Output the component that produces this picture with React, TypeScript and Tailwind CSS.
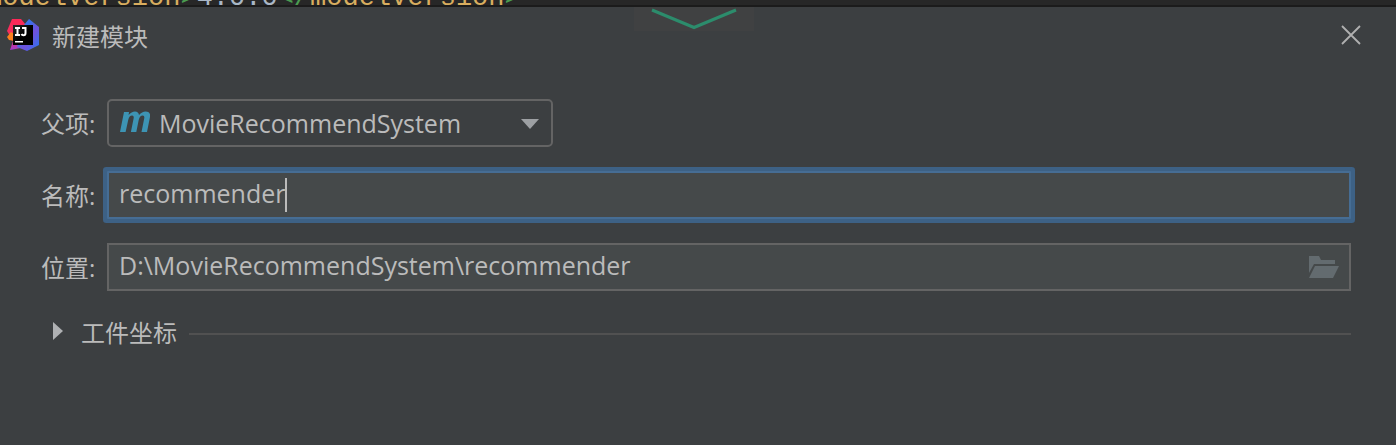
import type { ReactNode } from "react";

function IdeaLogo() {
  return (
    <svg viewBox="0 0 32 32" className="size-8 shrink-0" aria-hidden="true">
      <defs>
        <linearGradient id="blue" x1="0" y1="0" x2="1" y2="1">
          <stop offset="0" stopColor="#3f7cf0" />
          <stop offset=".35" stopColor="#3a70e8" />
          <stop offset=".6" stopColor="#7050dc" />
          <stop offset="1" stopColor="#2477f2" />
        </linearGradient>
        <linearGradient id="pink" x1="0" y1="0" x2="0" y2="1">
          <stop offset="0" stopColor="#fe2857" />
          <stop offset=".6" stopColor="#f0305f" />
          <stop offset="1" stopColor="#a03bd0" />
        </linearGradient>
        <linearGradient id="black" x1="0" y1="0" x2="1" y2="1">
          <stop offset="0" stopColor="#2b2b2b" />
          <stop offset=".5" stopColor="#000" />
        </linearGradient>
      </defs>
      <path d="M5 0H14L19 6V28L3 31 6 22 0 12Z" fill="url(#pink)" />
      <path d="M22 0 32 8V26L20 32 10 28 17 6Z" fill="url(#blue)" />
      <path d="M0 18 4 13 7 15V22L2 21Z" fill="#fc801d" />
      <path d="M6 6H26V26H6Z" fill="url(#black)" />
      <path
        d="M8 9H13M10.500 9V16M8 16H13M15 9H18.500V14Q18.500 16.200 16.500 16.200 15 16.200 14.500 15"
        fill="none"
        stroke="#fff"
        strokeWidth="2"
      />
      <path d="M8 22H16V23.500H8Z" fill="#fff" />
    </svg>
  );
}

function EditorStrip() {
  return (
    <div className="flex h-[7px] items-end overflow-hidden border-b-2 border-[#1b1b1b] bg-[#272727]">
      <code className="-ml-3.5 shrink-0 whitespace-pre font-['Liberation_Mono',monospace] text-[27px] leading-[14px] text-[#d9ae5f]">
        modelVersion<span className="text-[#4a9c50]">&gt;</span>
        <span className="text-[#a9b7c6]">4.0.0</span>
        <span className="text-[#4a9c50]">&lt;/</span>modelVersion
        <span className="text-[#4a9c50]">&gt;</span>
      </code>
    </div>
  );
}

function Row({ id, label, children }: { id: string; label: string; children: ReactNode }) {
  return (
    <div className="flex h-12 items-center">
      <label htmlFor={id} className="w-[66px] shrink-0 pt-0.5 text-2xl">
        {label}
      </label>
      {children}
    </div>
  );
}

export default function App() {
  return (
    <main className="flex min-h-screen flex-col bg-[#3c3f41] font-['Open_Sans','Noto_Sans_CJK_SC',sans-serif] text-[#bbbbbb]">
      <EditorStrip />
      <header className="relative flex h-14 items-center pr-[34px] pl-[7px]">
        <IdeaLogo />
        <h1 className="ml-[13px] pt-1 text-2xl">新建模块</h1>
        <div className="absolute top-0 left-1/2 h-6 w-[120px] -translate-x-[64px] bg-[#404142]">
          <svg viewBox="0 0 120 24" className="block h-6 w-full" aria-hidden="true">
            <path d="M18 3 60 20.500 102 3" fill="none" stroke="#2c8c6c" strokeWidth="3" />
          </svg>
        </div>
        <button type="button" aria-label="关闭" className="ml-auto">
          <svg viewBox="0 0 22 22" className="block size-[22px]" aria-hidden="true">
            <path d="M2 2 20 20M20 2 2 20" stroke="#b0b0b0" strokeWidth="1.800" />
          </svg>
        </button>
      </header>

      <form className="flex flex-col gap-6 pt-9 pr-[45px] pl-[41px]">
        <Row id="parent" label="父项:">
          <div className="relative h-12 w-[446px]">
            <select
              id="parent"
              className="h-12 w-full appearance-none rounded-[5px] border-2 border-[#646464] bg-[#3c3f41] pt-0.5 pl-[50px] text-[25px] outline-none"
            >
              <option>MovieRecommendSystem</option>
            </select>
            <svg viewBox="0 0 30 22" className="pointer-events-none absolute top-3 left-[13px] h-[22px] w-[30px]" aria-hidden="true">
              <path
                d="M4 1H9L8.600 4Q11.500 .500 15 .500 18.500 .500 19 4 22 .500 25.500 .500 31 .500 29.900 6.500L27 21H21.500L24.200 7.500Q24.800 4.600 22.800 4.600 19.800 4.600 18.700 9L16.300 21H10.900L13.600 7.500Q14.200 4.600 12.200 4.600 9.200 4.600 8.200 9L5.600 21H0Z"
                fill="#3d94b4"
              />
            </svg>
            <svg viewBox="0 0 18 10" className="pointer-events-none absolute top-5 right-3.5 h-2.5 w-[18px]" aria-hidden="true">
              <path d="M0 0H18L9 10Z" fill="#9da0a3" />
            </svg>
          </div>
        </Row>

        <Row id="name" label="名称:">
          <div className="flex h-12 min-w-0 flex-1 items-center rounded-[1px] border-2 border-[#466d94] bg-[#45494a] pl-2.5 shadow-[0_0_0_4px_#3d6185]">
            <input
              id="name"
              type="text"
              defaultValue="recommender"
              className="max-w-full bg-transparent pb-0.5 text-[25px] caret-transparent outline-none [field-sizing:content]"
            />
            <span className="h-[34px] w-0.5 shrink-0 bg-[#bbbbbb]" />
          </div>
        </Row>

        <Row id="location" label="位置:">
          <div className="flex h-12 min-w-0 flex-1 items-center border-2 border-[#646464] bg-[#45494a] pr-2.5 pl-2.5">
            <input
              id="location"
              type="text"
              defaultValue="D:\MovieRecommendSystem\recommender"
              className="min-w-0 flex-1 bg-transparent pb-0.5 text-[25px] outline-none"
            />
            <button type="button" aria-label="浏览">
              <svg viewBox="0 0 30 22" className="block h-[22px] w-[30px]" aria-hidden="true">
                <path d="M0 0H10L12 4H26V8H5L0 17Z" fill="#636b6f" />
                <path d="M6 10H30L24 22H0Z" fill="#636b6f" />
              </svg>
            </button>
          </div>
        </Row>

        <div className="flex items-center">
          <button type="button" aria-expanded="false" className="flex items-center pl-3 text-2xl leading-9">
            <svg viewBox="0 0 10 18" className="mr-[18px] mb-1 h-[18px] w-2.5" aria-hidden="true">
              <path d="M0 0 10 9 0 18Z" fill="#afb1b3" />
            </svg>
            工件坐标
          </button>
          <span className="mt-0.5 ml-3 h-0.5 flex-1 bg-[#515151]" />
        </div>
      </form>
    </main>
  );
}
